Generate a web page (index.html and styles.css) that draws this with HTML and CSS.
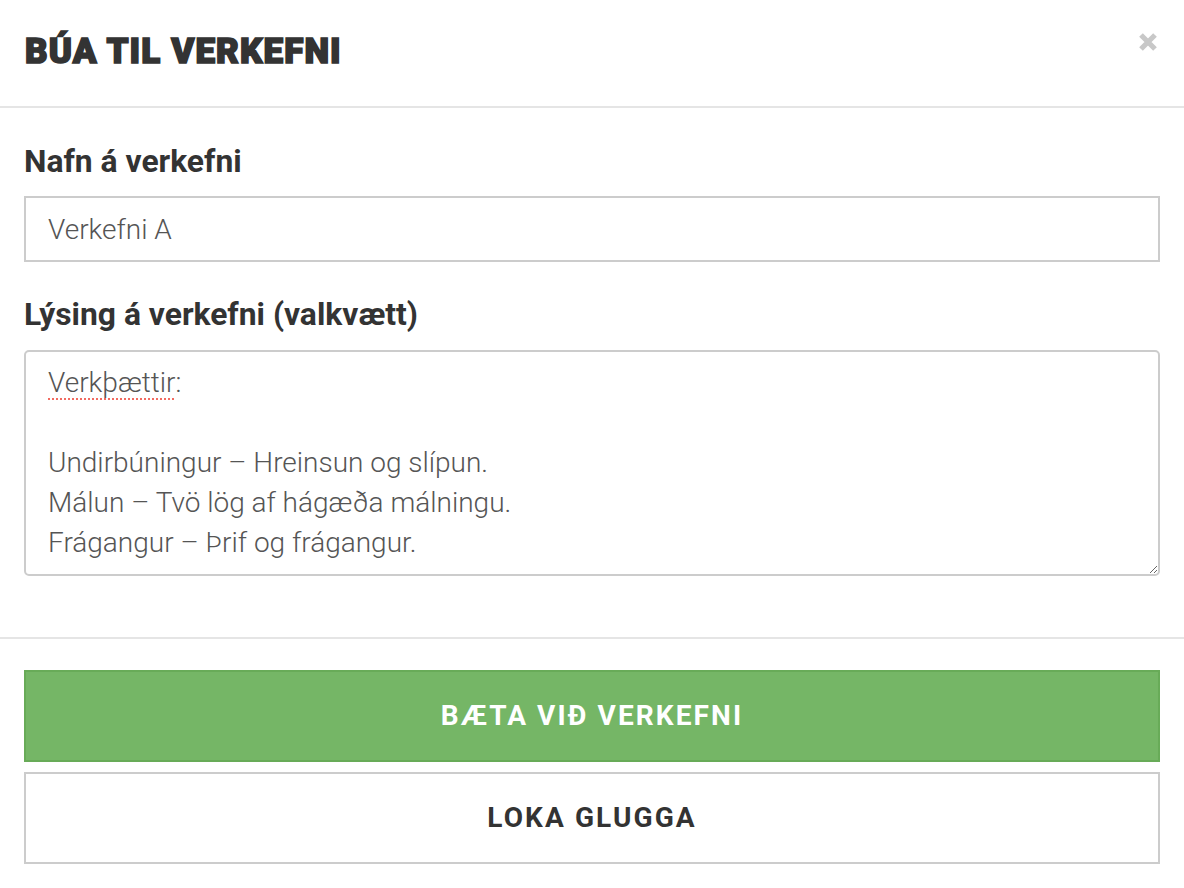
FILE: index.html
```html
<!DOCTYPE html>
<html lang="is">
<head>
<meta charset="utf-8">
<title>Búa til verkefni</title>
<link rel="stylesheet" href="styles.css">
</head>
<body>
<div class="modal">
  <header class="modal-header">
    <h1 class="modal-title">BÚA TIL VERKEFNI</h1>
    <button class="close" type="button" aria-label="Loka">
      <svg width="20" height="20" viewBox="0 0 20 20"><path d="M3 3 L17 17 M17 3 L3 17" stroke="#c8c8c8" stroke-width="5.2" fill="none"/></svg>
    </button>
  </header>
  <section class="modal-body">
    <label class="field-label">Nafn á verkefni</label>
    <input class="text-input" type="text" value="Verkefni A">
    <label class="field-label label-gap">Lýsing á verkefni (valkvætt)</label>
    <div class="textarea"><span class="misspelled">Verkþættir</span>:<br><br>Undirbúningur – Hreinsun og slípun.<br>Málun – Tvö lög af hágæða málningu.<br>Frágangur – Þrif og frágangur.</div>
  </section>
  <footer class="modal-footer">
    <button class="btn btn-primary" type="button">BÆTA VIÐ VERKEFNI</button>
    <button class="btn btn-default" type="button">LOKA GLUGGA</button>
  </footer>
</div>
</body>
</html>
```
FILE: styles.css
```css
html, body {
  margin: 0;
  padding: 0;
  background: #fff;
}
body {
  font-family: Roboto, "Liberation Sans", sans-serif;
  color: #333;
}
.modal {
  width: 1184px;
}
.modal-header {
  height: 106px;
  border-bottom: 2px solid #e5e5e5;
  display: flex;
  align-items: center;
  justify-content: space-between;
  padding: 0 26px 0 24px;
}
.modal-title {
  margin: 0;
  font-weight: 900;
  font-size: 35px;
  line-height: 40px;
  letter-spacing: 1.1px;
  -webkit-text-stroke: 1.6px #333;
  color: #333;
  padding-bottom: 2px;
  padding-left: 1px;
}
.close {
  border: 0;
  background: none;
  padding: 0;
  width: 20px;
  height: 20px;
  display: flex;
  margin-top: -22px;
}
.modal-body {
  padding: 35px 24px 0 24px;
  display: flex;
  flex-direction: column;
}
.field-label {
  font-weight: 700;
  font-size: 31.8px;
  line-height: 36px;
  color: #333;
}
.label-gap {
  margin-top: 34px;
}
.text-input {
  margin-top: 17px;
  height: 66px;
  box-sizing: border-box;
  border: 2px solid #ccc;
  border-radius: 0;
  padding: 0 22px;
  font-family: Roboto, "Liberation Sans", sans-serif;
  font-weight: 300;
  font-size: 28px;
  color: #555;
  outline: none;
}
.textarea {
  margin-top: 18px;
  height: 226px;
  box-sizing: border-box;
  border: 2px solid #ccc;
  border-radius: 5px;
  padding: 11px 22px 11px 22px;
  font-weight: 300;
  font-size: 28px;
  line-height: 40px;
  color: #555;
  overflow: auto;
  resize: both;
}
.misspelled {
  text-decoration: underline dotted #f26b61;
  text-decoration-thickness: 2px;
  text-underline-offset: 6px;
}
.modal-footer {
  margin-top: 61px;
  border-top: 2px solid #e5e5e5;
  padding: 31px 24px 24px 24px;
  display: flex;
  flex-direction: column;
  gap: 10px;
}
.btn {
  height: 92px;
  box-sizing: border-box;
  font-family: Roboto, "Liberation Sans", sans-serif;
  font-weight: 700;
  font-size: 28px;
  letter-spacing: 2.1px;
  border-radius: 0;
  cursor: pointer;
  padding: 0 0 2px 0;
}
.btn-primary {
  background: #75b666;
  border: 2px solid #68ab58;
  color: #fff;
}
.btn-default {
  background: #fff;
  border: 2px solid #ccc;
  color: #333;
}
```
